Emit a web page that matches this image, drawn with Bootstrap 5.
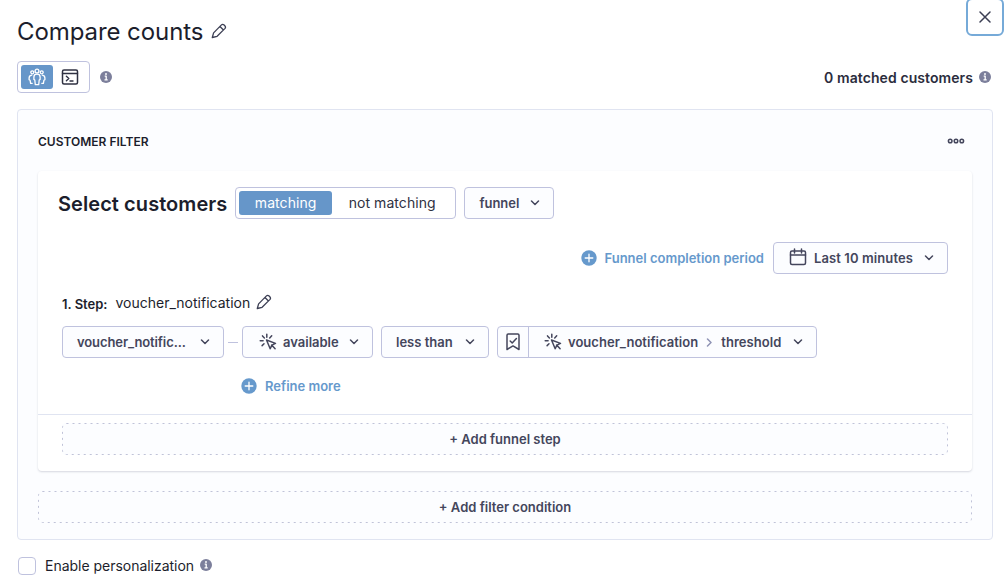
<!DOCTYPE html>
<html lang="en">
<head>
<meta charset="utf-8">
<meta name="viewport" content="width=device-width, initial-scale=1">
<title>Compare counts</title>
<link href="https://cdn.jsdelivr.net/npm/bootstrap@5.3.0/dist/css/bootstrap.min.css" rel="stylesheet">
<style>
body{font-family:Inter,"Liberation Sans",sans-serif;font-size:14px;line-height:20px;color:#1c1e2c;background:#fff;overflow:hidden}
svg{display:block;flex:none;fill:none;stroke:currentColor;stroke-width:1.5;stroke-linecap:round;stroke-linejoin:round}
.page{padding:0 15px 0 17px}
.topbar{height:61px}
.title{font-size:24px;line-height:32px;font-weight:400;margin:16px 8px 0 0;letter-spacing:-.08px}
.title-pen{margin-top:23px;color:#3c3f54}
.btn-x{width:38px;height:38px;margin:-2px -11px 0 0;border:2px solid #76aad8;border-radius:6px;padding:0;color:#3c3f54;background:#fff}
.seg{height:32px;border:1px solid #bfc2de;border-radius:4px;padding:3px;background:#fff}
.seg .btn{height:24px;border:0;border-radius:3px;padding:0;font-size:14px;line-height:24px;color:#2f3142;letter-spacing:.06px}
.seg .btn.active{background:#6696c9;color:#fff}
.info{color:#7c7f9b}
.matched{font-weight:600;letter-spacing:.08px;color:#2b2d3d;padding-top:2px}
.panel{height:431px;margin-top:16px;border:1px solid #e0e4f1;border-radius:4px;background:#fcfdff;padding:0 20px}
.panel-head{height:61px;padding-top:2px}
.panel-title{font-size:12px;font-weight:600;margin:2px 0 0}
.box{height:300px;background:#fff;border-radius:4px;box-shadow:0 1px 2px rgba(40,45,75,.18)}
.box-main{height:244px;border-bottom:1px solid #e0e4f1;padding:16px 24px 0}
.heading{font-size:20px;line-height:32px;font-weight:600;margin:1px 8px -1px -4px;letter-spacing:.065px}
.pick{height:32px;border:1px solid #bfc2de;border-radius:4px;background:#fcfdff;color:#44465c;font-size:13px;font-weight:600;line-height:18px;padding:0 13px 0 14px}
.pick:hover{border-color:#9fa4cb;background:#f5f7fd}
.link-act{color:#6699cc;font-size:13px;font-weight:600;line-height:18px;text-decoration:none}
.dash{width:10px;height:1px;background:#bfc2de;margin:1px 4px 0 4px}
.step-name{font-size:14px}
.tile{width:31px;height:30px;border-right:1px solid #bfc2de}
.adder{position:relative;height:32px;width:100%;border:0;border-radius:4px;background:#fcfdff;color:#44465c;font-size:13px;font-weight:600;padding:0}
.adder svg{position:absolute;left:0;top:0;width:100%;height:100%;stroke:#c0c3d8;stroke-width:1;stroke-linecap:butt;stroke-dasharray:2 4;overflow:visible}
.check{width:18px;height:18px;border:1px solid #bfc2de;border-radius:4px;margin:0 9px 0 1px}
</style>
</head>
<body>
<svg width="0" height="0" class="position-absolute" aria-hidden="true">
  <symbol id="pen" viewBox="0 0 16 16"><path d="M1.300 14.500l1.300-4.600 7.600-7.800a2.100 2.100 0 0 1 2.900-.1l.7.7a2.100 2.100 0 0 1 0 2.900l-7.700 7.700zM9 3.500l3.200 3.200" stroke-width="1.300"/></symbol>
  <symbol id="info" viewBox="0 0 12 12"><circle cx="6" cy="6" r="6" fill="currentColor" stroke="none"/><path d="M4.700 5.100h1.500v3.500M4.500 8.900h3.200" stroke="#fff" stroke-width="1.300" stroke-linecap="butt"/><circle cx="6" cy="3" r=".95" fill="#fff" stroke="none"/></symbol>
  <symbol id="chev" viewBox="0 0 10 6"><path d="M1.500 1L5 4.500 8.500 1"/></symbol>
  <symbol id="plus" viewBox="0 0 16 16"><circle cx="8" cy="8" r="7.700" fill="currentColor" stroke="none"/><path d="M8 4.200v7.600M4.200 8h7.600" stroke="#fff" stroke-width="1.300"/></symbol>
  <symbol id="event" viewBox="0 0 18 18"><path d="M7.500 7l9 3.400-3.600 1.700-1.700 3.600zM12.600 12l3.500 3.700M7.800 1.300v2.900M3.500 2.900l1.900 2M12.700 2.700l-2 2.200M1.200 7.800h2.900M5 10.700l-1.900 1.900"/></symbol>
</svg>
<main class="page">
  <header class="topbar d-flex align-items-start">
    <h1 class="title">Compare counts</h1>
    <svg class="title-pen" width="16" height="16"><use href="#pen"/></svg>
    <button class="btn btn-x ms-auto d-flex align-items-center justify-content-center" aria-label="Close"><svg width="12" height="12" viewBox="0 0 12 12"><path d="M1 1l10 10M11 1L1 11"/></svg></button>
  </header>

  <div class="d-flex align-items-center" style="height:32px">
    <div class="seg d-flex" style="width:73px">
      <button class="btn active d-flex align-items-center justify-content-center" style="width:32px" aria-label="Customers">
        <svg width="18" height="18" viewBox="0 0 18 18" style="stroke-width:1.3"><circle cx="9" cy="3" r="1.900"/><circle cx="4.300" cy="4.300" r="1.500"/><circle cx="13.700" cy="4.300" r="1.500"/><path d="M7.300 16.700l-.5-4.700-.9-.6V9c0-1.900 1.200-2.800 3.100-2.800s3.100.9 3.100 2.800v2.400l-.9.600-.5 4.700zM3.700 7.200C1.900 7.500 1.100 8.600 1.100 10v1.700l1 .6.500 3h1.600M14.300 7.200c1.800.3 2.600 1.400 2.600 2.800v1.700l-1 .6-.5 3h-1.600"/></svg>
      </button>
      <button class="btn d-flex align-items-center justify-content-center" style="width:33px" aria-label="Console">
        <svg width="18" height="16" viewBox="0 0 18 16"><rect x="1.500" y="1" width="15" height="14" rx="1.500"/><path d="M1.500 4.500h15M5.400 7.300l2.400 2.200-2.400 2.200M9 12h3" stroke-width="1.400"/></svg>
      </button>
    </div>
    <svg class="info" width="12" height="12" style="margin-left:10px"><use href="#info"/></svg>
    <span class="matched ms-auto">0 matched customers</span>
    <svg class="info" width="12" height="12" style="margin:0 2px 0 6px"><use href="#info"/></svg>
  </div>

  <section class="panel">
    <div class="panel-head d-flex align-items-center justify-content-between">
      <h2 class="panel-title">CUSTOMER FILTER</h2>
      <svg width="18" height="6" viewBox="0 0 18 6" style="margin:-2px 7px 0 0;color:#44465c"><circle cx="3.200" cy="3" r="1.800"/><circle cx="9" cy="3" r="1.800"/><circle cx="14.800" cy="3" r="1.800"/></svg>
    </div>
    <div class="box">
      <div class="box-main">
        <div class="d-flex">
          <h3 class="heading">Select customers</h3>
          <div class="seg d-flex" style="width:221px">
            <button class="btn active" style="width:93px">matching</button>
            <button class="btn" style="width:121px">not matching</button>
          </div>
          <button class="pick d-flex align-items-center justify-content-between ms-2" style="width:90px"><span>funnel</span><svg width="10" height="6"><use href="#chev"/></svg></button>
        </div>
        <div class="d-flex justify-content-end align-items-center" style="margin-top:23px">
          <a href="#" class="link-act d-flex align-items-center"><svg class="me-2" width="16" height="16"><use href="#plus"/></svg><span>Funnel completion period</span></a>
          <button class="pick d-flex align-items-center" style="width:175px;margin-left:9px;padding-left:15px">
            <svg width="18" height="18" viewBox="0 0 18 18" style="margin:-2px 7px 0 0"><rect x="1.500" y="3" width="15" height="13.500" rx="1.500"/><path d="M1.500 7h15M5.500 1v4M12.500 1v4"/></svg>
            <span style="letter-spacing:.1px">Last 10 minutes</span><svg class="ms-auto" width="10" height="6"><use href="#chev"/></svg>
          </button>
        </div>
        <div class="d-flex align-items-center" style="height:24px;margin-top:16px">
          <span class="fw-semibold" style="font-size:13px;margin:4px 8px 0 0">1. Step:</span>
          <span class="step-name" style="margin-top:2px">voucher_notification</span>
          <svg width="16" height="16" style="margin-left:6px;color:#3c3f54"><use href="#pen"/></svg>
        </div>
        <div class="d-flex align-items-center" style="margin-top:12px">
          <button class="pick d-flex align-items-center justify-content-between" style="width:162px"><span style="letter-spacing:-.1px">voucher_notific...</span><svg width="10" height="6"><use href="#chev"/></svg></button>
          <span class="dash"></span>
          <button class="pick d-flex align-items-center" style="width:131px;padding-left:16px"><svg width="18" height="18" style="margin-right:6px"><use href="#event"/></svg><span>available</span><svg class="ms-auto" width="10" height="6"><use href="#chev"/></svg></button>
          <button class="pick d-flex align-items-center justify-content-between ms-2" style="width:108px"><span>less than</span><svg width="10" height="6"><use href="#chev"/></svg></button>
          <div class="pick d-flex align-items-center ms-2" style="width:320px;padding-left:0">
            <div class="tile d-flex align-items-center justify-content-center"><svg width="14" height="18" viewBox="0 0 14 18"><path d="M1 2.200C1 1.500 1.500 1 2.200 1h9.600c.7 0 1.200.5 1.200 1.200v14.300l-6-3.600-6 3.600zM4.200 8l2 2 4.200-4.500"/></svg></div>
            <svg width="18" height="18" style="margin:0 6px 0 15px"><use href="#event"/></svg><span style="letter-spacing:.03px">voucher_notification</span>
            <svg width="6" height="9" viewBox="0 0 6 9" style="margin:0 9px 0 8px;color:#8f93b5"><path d="M1.500 1L5 4.500 1.500 8"/></svg><span style="letter-spacing:.07px">threshold</span><svg class="ms-auto" width="10" height="6"><use href="#chev"/></svg>
          </div>
        </div>
        <a href="#" class="link-act d-inline-flex align-items-center" style="margin:19px 0 0 179px"><svg class="me-2" width="16" height="16"><use href="#plus"/></svg><span>Refine more</span></a>
      </div>
      <div style="padding:8px 24px 0"><button class="adder d-block"><svg><rect x=".5" y=".5" rx="4" style="width:calc(100% - 1px);height:calc(100% - 1px)"/></svg>+ Add funnel step</button></div>
    </div>
    <button class="adder d-block" style="margin-top:20px"><svg><rect x=".5" y=".5" rx="4" style="width:calc(100% - 1px);height:calc(100% - 1px)"/></svg>+ Add filter condition</button>
  </section>

  <label class="d-flex align-items-center" style="height:20px;margin-top:16px">
    <span class="check"></span><span style="letter-spacing:-.02px">Enable personalization</span>
    <svg class="info" width="12" height="12" style="margin:-2px 0 0 6px"><use href="#info"/></svg>
  </label>
</main>
<script src="https://cdn.jsdelivr.net/npm/bootstrap@5.3.0/dist/js/bootstrap.bundle.min.js"></script>
</body>
</html>
